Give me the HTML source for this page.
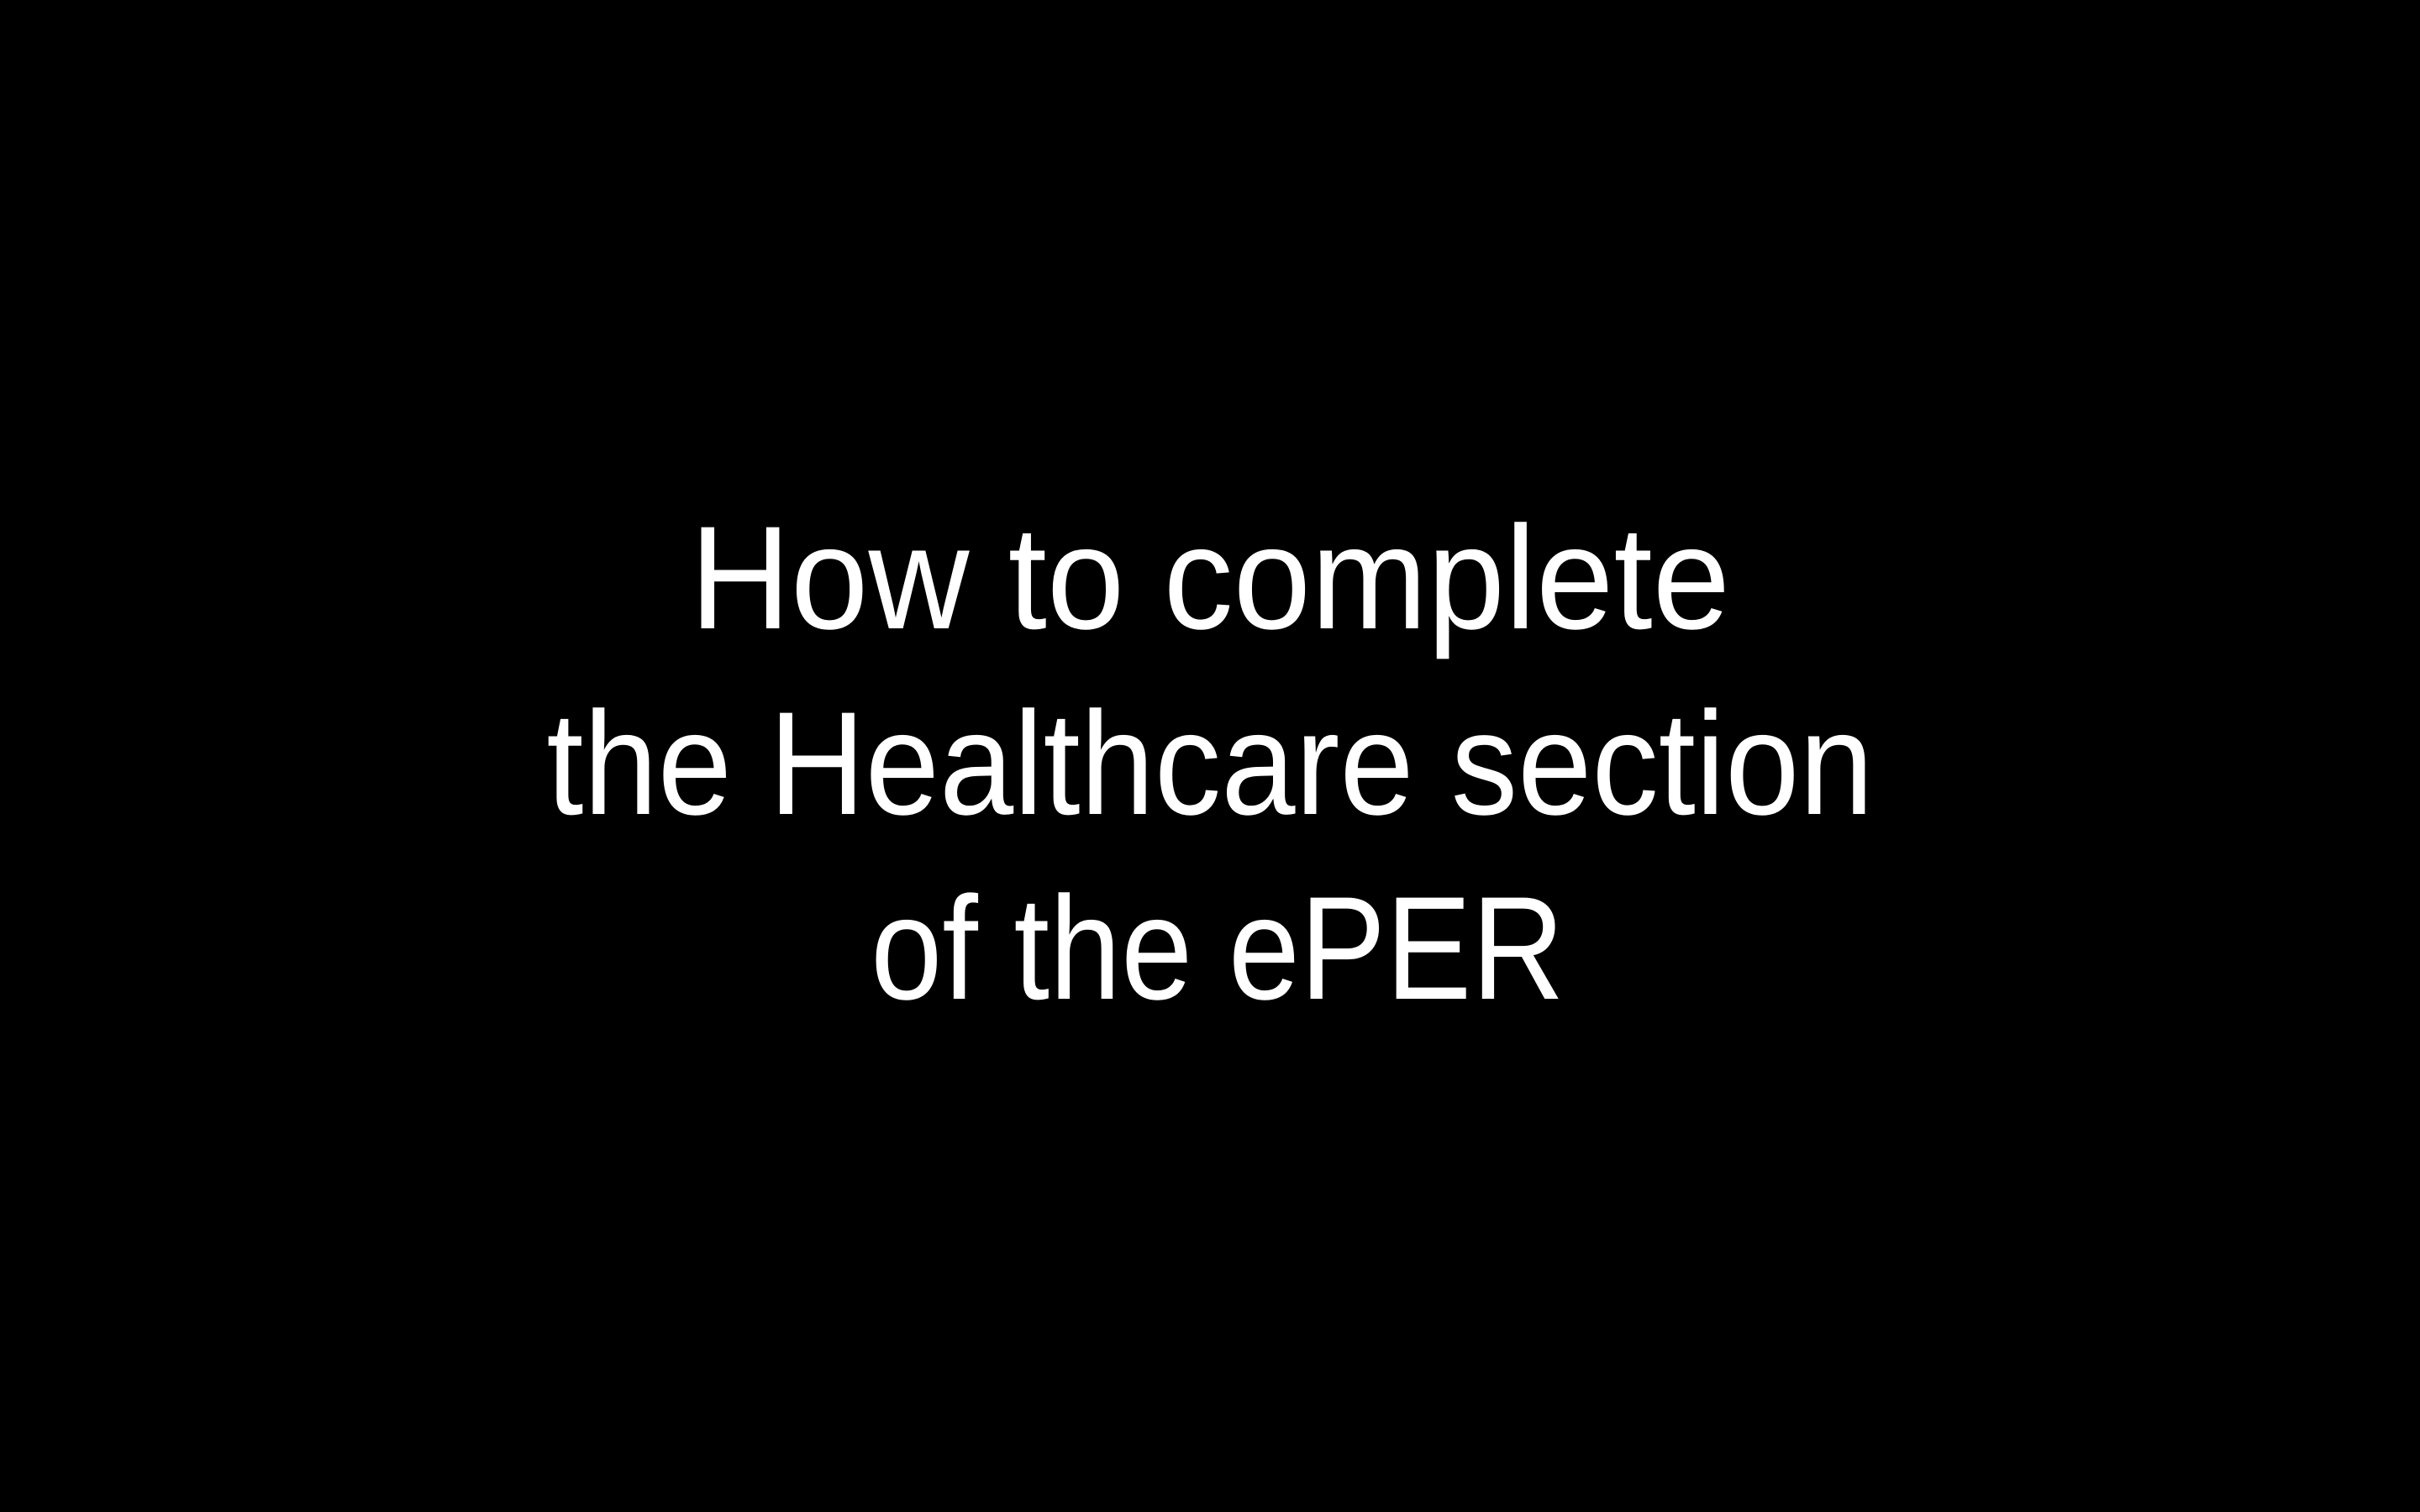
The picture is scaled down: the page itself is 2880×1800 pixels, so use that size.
<!DOCTYPE html>
<html><head><meta charset="utf-8"><style>
html,body{margin:0;padding:0;background:#000;width:2880px;height:1800px;overflow:hidden}
.l{position:absolute;left:0;width:2880px;text-align:center;color:#fff;font-family:"Liberation Sans",sans-serif;font-size:175px;line-height:1.117;transform-origin:1440px 0;white-space:nowrap}
</style></head><body>
<div class="l" style="top:591px;transform:scaleX(0.95)">How to complete</div>
<div class="l" style="top:812px;transform:scaleX(0.907)">the Healthcare section</div>
<div class="l" style="top:1032px;left:9px;transform:scaleX(0.875)">of the ePER</div>
</body></html>
